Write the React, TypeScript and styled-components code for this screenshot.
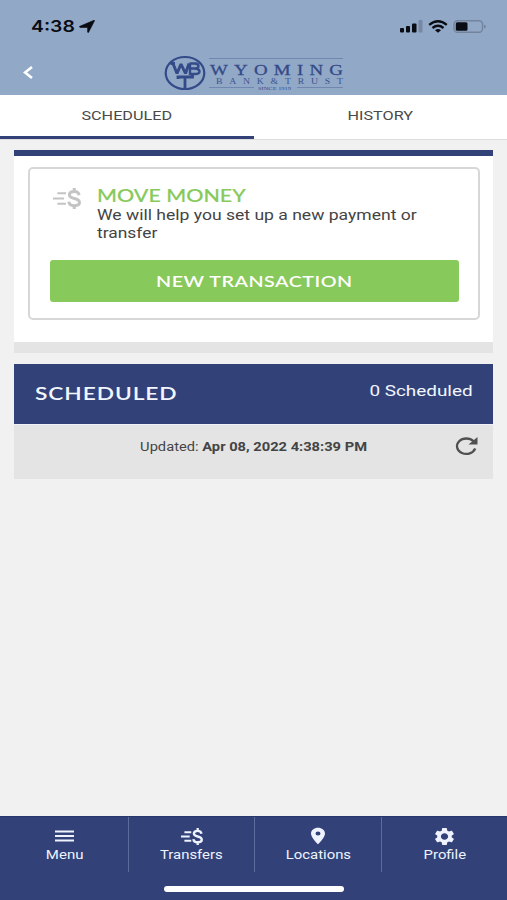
import React from 'react';
import styled, { createGlobalStyle } from 'styled-components';
import { MdPlace, MdSettings } from 'react-icons/md';

const navy = '#324278';
const green = '#88c95b';

const GlobalStyle = createGlobalStyle`
  *, *::before, *::after { box-sizing: border-box; }
  body { margin: 0; background: #f1f1f1; }
`;

const Screen = styled.div`
  width: 507px;
  height: 900px;
  display: flex;
  flex-direction: column;
  overflow: hidden;
  background: #f1f1f1;
  color: #444;
  font-family: Roboto, sans-serif;
`;

const Wide = styled.span<{ $x?: number; $from?: string; $gap?: number }>`
  display: inline-block;
  white-space: nowrap;
  letter-spacing: ${(p) => p.$gap ?? 0}px;
  transform: scaleX(${(p) => p.$x ?? 1.2});
  transform-origin: ${(p) => p.$from ?? 'center'};
`;

const TopBar = styled.header`
  height: 95px;
  flex: none;
  background: #92a8c7;
`;

const StatusBar = styled.div`
  height: 50px;
  padding: 2px 20px 0 31px;
  display: flex;
  align-items: center;
  justify-content: space-between;
  color: #090c12;
`;

const Clock = styled.div`
  display: flex;
  align-items: center;
  width: 64px;
  justify-content: space-between;
  font: 600 16px/20px Inter, sans-serif;
`;

const StatusIcons = styled.div`
  display: flex;
  align-items: center;
  gap: 5px;
`;

const TitleBar = styled.div`
  height: 45px;
  padding: 0 163px 0 23px;
  display: flex;
  align-items: center;
  justify-content: space-between;
`;

const Tabs = styled.nav`
  display: grid;
  grid-template-columns: 254px 253px;
  height: 45px;
  flex: none;
  background: #fff;
  border-bottom: 1px solid #dcdcdc;
`;

const Tab = styled.div<{ $active?: boolean }>`
  height: 44px;
  padding-top: 10.5px;
  text-align: center;
  font-size: 13.5px;
  line-height: 18px;
  color: #4a4a4a;
  border-bottom: ${(p) => (p.$active ? `3px solid ${navy}` : 'none')};
`;

const Content = styled.main`
  flex: 1;
  padding: 10px 14px 0;
`;

const MoveCard = styled.section`
  height: 203px;
  padding: 11px 13px 0 14px;
  background: #fff;
  border-top: 6px solid ${navy};
  border-bottom: 11px solid #e4e4e4;
`;

const MoveBox = styled.div`
  height: 153px;
  padding: 20px 20px 0 20px;
  border: 2px solid #d7d7d7;
  border-radius: 5px;
`;

const MoveIntro = styled.div`
  display: flex;
  height: 71px;
  padding-left: 3px;
  gap: 16px;
`;

const MoveIcon = styled.div`
  height: 22px;
  margin-top: -1px;
  line-height: 0;
  color: #c4c4c4;
`;

const MoveTitle = styled.div`
  margin-top: -2px;
  font: 500 16.5px/18px Lato, sans-serif;
  color: ${green};
  -webkit-text-stroke: 0.15px ${green};
`;

const MoveText = styled.div`
  padding-top: 1.5px;
  font-size: 14.5px;
  line-height: 18.5px;
`;

const NewButton = styled.button`
  width: 408.5px;
  height: 42px;
  display: block;
  padding: 0;
  border: 0;
  border-radius: 3px;
  background: ${green};
  color: #fff;
  font: 600 15.5px/42px Lato, sans-serif;
`;

const ListHead = styled.div`
  display: flex;
  justify-content: space-between;
  height: 60px;
  margin-top: 11px;
  padding: 0 20px 0 21px;
  background: ${navy};
  color: #f2f6ff;
`;

const ListTitle = styled.div`
  font: 600 17.5px/59px Lato, sans-serif;
`;

const ListCount = styled.div`
  font-size: 15.5px;
  line-height: 54px;
`;

const Updated = styled.div`
  display: grid;
  grid-template-columns: 1fr auto 1fr;
  height: 55px;
  padding-right: 15px;
  background: #e4e4e4;
  border-top: 1px solid #eef1f8;
  font-size: 12.5px;
  line-height: 44px;
`;

const Reload = styled.div`
  grid-column: 3;
  justify-self: end;
  padding-top: 11px;
  height: 40px;
  line-height: 0;
  color: #505050;
`;

const UpdatedText = styled.div`
  grid-column: 2;
  padding-left: 15px;
`;

const BottomNav = styled.footer`
  height: 84px;
  flex: none;
  background: ${navy};
  color: #eef3ff;
  border-top: 1px solid #27376b;
`;

const NavItems = styled.div`
  display: grid;
  grid-template-columns: 128.5px 126.5px 126.5px 125.5px;
  height: 55px;
`;

const NavItem = styled.div`
  display: flex;
  flex-direction: column;
  align-items: center;
  padding: 9px 0 0 1px;
  font-size: 12.5px;
  line-height: 18px;
  border-right: 1px solid #5e6c9b;
  &:last-child { border-right: 0; }
`;

const NavIcon = styled.div<{ $x?: number }>`
  height: 20px;
  display: flex;
  align-items: center;
  transform: scaleX(${(p) => p.$x ?? 1});
`;

const HomeBar = styled.div`
  width: 180px;
  height: 6px;
  margin: 14px auto 0;
  border-radius: 3px;
  background: #fff;
`;

const TransferIcon = ({ width, height }: { width: number; height: number }) => (
  <svg width={width} height={height} viewBox="0 0 29 22" fill="none" stroke="currentColor" preserveAspectRatio="none">
    <path d="M4.500 5.500H13.500M0 11H11.500M4.500 16.500H13.500" strokeWidth="2.300" />
    <path d="M27 7.500C26.600 4.800 24.800 3.700 22 3.700C19 3.700 17 5 17 7.200C17 9.600 19 10.400 22 11C25.400 11.700 27.400 12.800 27.400 15.200C27.400 17.400 25.200 18.500 22 18.500C18.800 18.500 16.600 17.200 16.400 14.300M22 0V3.600M22 18.500V22" strokeWidth="3.100" />
  </svg>
);

const Logo = () => (
  <svg width="181" height="38" viewBox="0 0 181 38">
    <g fill="none" stroke="#334b88">
      <ellipse cx="22" cy="19" rx="19.300" ry="16" strokeWidth="2.200" />
      <path d="M7.500 9.500H12M10 9.500L14 19.500L18 10L22.500 19.500L26 9.500" strokeWidth="2.900" strokeLinejoin="bevel" />
      <path d="M26.500 9.500H32Q35.500 9.700 35.500 12Q35.500 14.500 32 14.500H26.500M32 14.500Q36.500 15 36.500 17.500Q36.500 20 32 20H27V9.500" strokeWidth="2.400" />
      <path d="M15 25V23H29.500V20M22 23V34" strokeWidth="2.800" />
      <path d="M46 4.500H180M46 33.500H91M134 33.500H180" strokeWidth=".7" opacity=".5" />
    </g>
    <g fill="#334b88" fontFamily="Liberation Serif, serif">
      <text transform="translate(47 20.500) scale(1.22 1)" fontSize="15.500" textLength="109" stroke="#334b88" strokeWidth=".3">WYOMING</text>
      <text transform="translate(53 29.500) scale(1.22 1)" fontSize="8" textLength="104" opacity=".9">BANK&amp;TRUST</text>
      <text x="95" y="35.500" fontSize="5" textLength="33" lengthAdjust="spacingAndGlyphs">SINCE 1919</text>
    </g>
  </svg>
);

export default function App() {
  return (
    <>
      <GlobalStyle />
      <Screen>
        <TopBar>
          <StatusBar>
            <Clock>
              <Wide $from="left" $x={1.21}>4:38</Wide>
              <svg width="16" height="13" viewBox="0 0 16 13"><path d="M.8 6.300L15 .3Q15.800 0 15.500 .8L9.600 12.300Q9 13 8.600 12.200V7.500H1.200Q-.2 7 .8 6.300Z" fill="currentColor" stroke="currentColor" strokeWidth=".6" /></svg>
            </Clock>
            <StatusIcons>
              <svg width="23" height="13" viewBox="0 0 23 13" fill="currentColor">
                <rect x="0" y="8" width="4" height="4.500" rx="1" /><rect x="6" y="6" width="4" height="6.500" rx="1" /><rect x="12" y="3.500" width="4.500" height="9" rx="1" /><rect x="18.500" y="0" width="4" height="12.500" rx="1" opacity=".2" />
              </svg>
              <svg width="20" height="13" viewBox="0 0 20 13" fill="none" stroke="currentColor" strokeWidth="2.300">
                <path d="M1.200 4.800Q10 -2.300 18.800 4.800M4.500 8Q10 3.600 15.500 8" /><path d="M7 10.200Q10 8 13 10.200L10 12.800Z" fill="currentColor" stroke="none" />
              </svg>
              <svg width="34" height="13" viewBox="0 0 34 13">
                <rect x="1" y=".7" width="28.500" height="11.600" rx="3.500" fill="none" stroke="#73839c" strokeWidth="1.400" />
                <rect x="2.800" y="2.300" width="11.700" height="8.400" rx="1.500" fill="currentColor" /><path d="M31 4.500Q35 6.500 31 8.500Z" fill="#73839c" />
              </svg>
            </StatusIcons>
          </StatusBar>
          <TitleBar>
            <svg width="10" height="13" viewBox="0 0 10 13"><path d="M9 1L2 6.500L9 12" fill="none" stroke="#fff" strokeWidth="2.600" /></svg>
            <Logo />
          </TitleBar>
        </TopBar>
        <Tabs>
          <Tab $active><Wide>SCHEDULED</Wide></Tab>
          <Tab><Wide>HISTORY</Wide></Tab>
        </Tabs>
        <Content>
          <MoveCard>
            <MoveBox>
              <MoveIntro>
                <MoveIcon><TransferIcon width={28} height={21} /></MoveIcon>
                <div>
                  <MoveTitle><Wide $x={1.3} $from="left">MOVE MONEY</Wide></MoveTitle>
                  <MoveText>
                    <Wide $x={1.21} $from="left">We will help you set up a new payment or</Wide>
                    <br />
                    <Wide $x={1.2} $from="left">transfer</Wide>
                  </MoveText>
                </div>
              </MoveIntro>
              <NewButton><Wide $x={1.27} $gap={0.4}>NEW TRANSACTION</Wide></NewButton>
            </MoveBox>
          </MoveCard>
          <ListHead>
            <ListTitle><Wide $x={1.3} $gap={0.7} $from="left">SCHEDULED</Wide></ListTitle>
            <ListCount><Wide $x={1.22} $from="right">0 Scheduled</Wide></ListCount>
          </ListHead>
          <Updated>
            <UpdatedText><Wide $x={1.175}>Updated: <b>Apr 08, 2022 4:38:39 PM</b></Wide></UpdatedText>
            <Reload>
              <svg width="23" height="20" viewBox="0 0 23 20">
                <path d="M18.500 5.300A9.300 7.700 0 1 0 20.200 12.500" fill="none" stroke="currentColor" strokeWidth="2.300" />
                <path d="M22.500 1V8.500H13.500Z" fill="currentColor" />
              </svg>
            </Reload>
          </Updated>
        </Content>
        <BottomNav>
          <NavItems>
            <NavItem>
              <NavIcon><svg width="19" height="12" viewBox="0 0 19 12"><path d="M0 1.500H19M0 6H19M0 10.500H19" stroke="currentColor" strokeWidth="1.900" /></svg></NavIcon>
              <Wide>Menu</Wide>
            </NavItem>
            <NavItem><NavIcon><TransferIcon width={22} height={17} /></NavIcon><Wide $x={1.19}>Transfers</Wide></NavItem>
            <NavItem><NavIcon $x={1.2}><MdPlace size={20} /></NavIcon><Wide $x={1.19}>Locations</Wide></NavItem>
            <NavItem><NavIcon $x={1.15}><MdSettings size={21} /></NavIcon><Wide $x={1.19}>Profile</Wide></NavItem>
          </NavItems>
          <HomeBar />
        </BottomNav>
      </Screen>
    </>
  );
}
